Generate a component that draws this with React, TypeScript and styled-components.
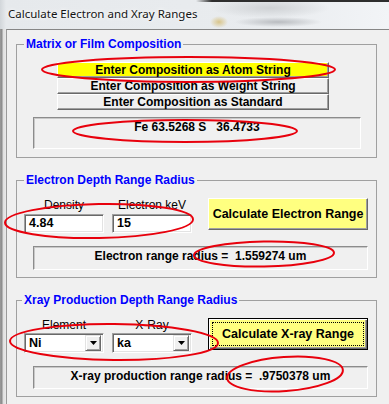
import styled, { createGlobalStyle } from "styled-components";

const GlobalStyle = createGlobalStyle`
  html, body {
    margin: 0;
    padding: 0;
    background: #f0f0f0;
  }
  body {
    font-family: "Liberation Sans", Arial, sans-serif;
  }
`;

const Window = styled.div`
  position: relative;
  width: 389px;
  height: 404px;
  overflow: hidden;
  display: flex;
  flex-direction: column;
  background: #f0f0f0;
`;

const TitleBar = styled.div`
  flex: none;
  height: 29px;
  box-sizing: border-box;
  display: flex;
  align-items: center;
  padding: 0 0 2px 8px;
  font-family: "Noto Sans", "Liberation Sans", sans-serif;
  font-size: 11.5px;
  color: #141414;
  text-shadow: 0 0 6px #fff, 0 0 3px #fff;
  background:
    linear-gradient(to right, transparent 196px, #2e2e2e 212px) top / 100% 2px no-repeat,
    radial-gradient(ellipse 9px 6px at 219px 22px, #d9c58a, transparent),
    radial-gradient(ellipse 44px 5px at 278px 22px, #b9bcc0, transparent),
    radial-gradient(ellipse 60px 10px at 270px 8px, #cfd2d5, transparent),
    linear-gradient(to right, #d2d6da 0, #e6e9ec 6px, #e9ecef 70%, #f2f4f7 100%);
`;

const Frame = styled.div`
  flex: 1;
  display: flex;
  background: linear-gradient(
    to right,
    #9b9b9b 0,
    #8a8a8a 2px,
    #dedede 3px,
    #e9e9e9 6px
  );
`;

const Client = styled.div`
  flex: 1;
  margin-left: 6px;
  border-top: 1px solid #868686;
  border-left: 1px solid #9a9a9a;
  background: #f0f0f0;
  padding: 6px 0 0 9px;
  display: flex;
  flex-direction: column;
  gap: 14px;
`;

const Group = styled.fieldset`
  margin: 0;
  width: 361px;
  min-width: 0;
  box-sizing: border-box;
  border: 1px solid #a0a0a0;
  padding: 10px 0 ${(p) => p.$bottom ?? 7}px 7px;
`;

const Legend = styled.legend`
  margin-left: ${(p) => p.$shift ?? 0}px;
  padding: 0 2px;
  font-weight: bold;
  font-size: 12px;
  line-height: 16px;
  color: #0000ff;
`;

const ButtonStack = styled.div`
  display: flex;
  flex-direction: column;
  width: 272px;
  margin-left: 33px;
`;

const CompButton = styled.button<{ $active?: boolean }>`
  height: 16px;
  margin: 0;
  padding: 0;
  box-sizing: border-box;
  border: 1px solid;
  border-color: #ffffff #696969 #696969 #ffffff;
  box-shadow: inset -1px -1px 0 #a0a0a0;
  background: ${(p) => (p.$active ? "#ffff00" : "#f0f0f0")};
  font-family: "Liberation Sans", Arial, sans-serif;
  font-weight: bold;
  font-size: 12px;
  line-height: 13px;
  color: #000;
`;

const ResultBox = styled.div<{ $width: number; $height: number }>`
  margin: 7px 0 0 9px;
  width: ${(p) => p.$width}px;
  height: ${(p) => p.$height}px;
  box-sizing: border-box;
  border: 1px solid;
  border-color: #8c8c8c #ffffff #ffffff #8c8c8c;
  box-shadow: inset 1px 1px 0 #c8c8c8;
  padding-top: 1px;
  text-align: center;
  font-weight: bold;
  font-size: 12px;
  line-height: 16px;
  white-space: pre;
  color: #000;
`;

const Row = styled.div`
  display: flex;
  align-items: flex-start;
  gap: 8px;
  margin-bottom: 13px;
`;

const Field = styled.div`
  display: flex;
  flex-direction: column;
  width: 80px;
`;

const FieldLabel = styled.span`
  height: 14px;
  line-height: 14px;
  text-align: center;
  font-size: 12px;
  color: #000;
`;

const TextInput = styled.div`
  margin-top: 2px;
  height: 19px;
  box-sizing: border-box;
  border: 1px solid;
  border-color: #a0a0a0 #ffffff #ffffff #a0a0a0;
  box-shadow: inset 1px 1px 0 #696969, inset -1px -1px 0 #e3e3e3;
  background: #fff;
  padding: 0 0 0 4px;
  font-weight: bold;
  font-size: 12.5px;
  line-height: 17px;
  color: #000;
`;

const Combo = styled.div`
  margin-top: 1px;
  height: 20px;
  box-sizing: border-box;
  border: 1px solid;
  border-color: #a0a0a0 #ffffff #ffffff #a0a0a0;
  box-shadow: inset 1px 1px 0 #696969, inset -1px -1px 0 #e3e3e3;
  background: #fff;
  padding: 2px 2px 2px 4px;
  display: flex;
  align-items: center;
  justify-content: space-between;
  font-weight: bold;
  font-size: 12.5px;
  color: #000;
`;

const ComboArrow = styled.span`
  width: 16px;
  height: 16px;
  box-sizing: border-box;
  border: 1px solid;
  border-color: #e3e3e3 #696969 #696969 #e3e3e3;
  box-shadow: inset 1px 1px 0 #fff, inset -1px -1px 0 #a0a0a0;
  background: #f0f0f0;
  display: flex;
  align-items: center;
  justify-content: center;
`;

const CalcButton = styled.button<{ $focused?: boolean }>`
  margin: 0 0 0 8px;
  width: 160px;
  height: 32px;
  box-sizing: border-box;
  padding: 0;
  background: #ffff80;
  font-family: "Liberation Sans", Arial, sans-serif;
  font-weight: bold;
  font-size: 12.5px;
  color: #000;
  border: 1px solid;
  border-color: ${(p) =>
    p.$focused ? "#000" : "#ffffff #696969 #696969 #ffffff"};
  box-shadow: ${(p) =>
    p.$focused
      ? "inset 1px 1px 0 #fff, inset -1px -1px 0 #696969, inset -2px -2px 0 #a0a0a0"
      : "inset -1px -1px 0 #a0a0a0"};
  outline: ${(p) => (p.$focused ? "1px dotted #000" : "none")};
  outline-offset: -5px;
`;

const Annotations = styled.svg`
  position: absolute;
  inset: 0;
  pointer-events: none;
`;

const ELLIPSES = [
  { cx: 188.5, cy: 69.5, rx: 146.5, ry: 12.5, rot: 0 },
  { cx: 185, cy: 131, rx: 112, ry: 11, rot: 0 },
  { cx: 99, cy: 221, rx: 94, ry: 17, rot: -1 },
  { cx: 264, cy: 254, rx: 70, ry: 12.5, rot: -1 },
  { cx: 114, cy: 342, rx: 104, ry: 18, rot: 0.5 },
  { cx: 285, cy: 374, rx: 58, ry: 17, rot: -4 },
];

function DropArrow() {
  return (
    <svg width="7" height="4" viewBox="0 0 7 4">
      <path d="M0 0h7L3.5 4z" fill="#000" />
    </svg>
  );
}

export default function App() {
  return (
    <>
      <GlobalStyle />
      <Window>
        <TitleBar>Calculate Electron and Xray Ranges</TitleBar>
        <Frame>
          <Client>
            <Group $bottom={8}>
              <Legend>Matrix or Film Composition</Legend>
              <ButtonStack>
                <CompButton $active>Enter Composition as Atom String</CompButton>
                <CompButton>Enter Composition as Weight String</CompButton>
                <CompButton>Enter Composition as Standard</CompButton>
              </ButtonStack>
              <ResultBox $width={328} $height={32}>
                {"Fe 63.5268 S   36.4733"}
              </ResultBox>
            </Group>

            <Group>
              <Legend>Electron Depth Range Radius</Legend>
              <Row>
                <Field>
                  <FieldLabel>Density</FieldLabel>
                  <TextInput>4.84</TextInput>
                </Field>
                <Field>
                  <FieldLabel>Electron keV</FieldLabel>
                  <TextInput>15</TextInput>
                </Field>
                <CalcButton>Calculate Electron Range</CalcButton>
              </Row>
              <ResultBox $width={335} $height={24} style={{ marginTop: 0 }}>
                {"Electron range radius =  1.559274 um"}
              </ResultBox>
            </Group>

            <Group>
              <Legend $shift={-2}>Xray Production Depth Range Radius</Legend>
              <Row>
                <Field>
                  <FieldLabel>Element</FieldLabel>
                  <Combo>
                    Ni
                    <ComboArrow>
                      <DropArrow />
                    </ComboArrow>
                  </Combo>
                </Field>
                <Field>
                  <FieldLabel>X-Ray</FieldLabel>
                  <Combo>
                    ka
                    <ComboArrow>
                      <DropArrow />
                    </ComboArrow>
                  </Combo>
                </Field>
                <CalcButton $focused>Calculate X-ray Range</CalcButton>
              </Row>
              <ResultBox $width={335} $height={23} style={{ marginTop: 0 }}>
                {"X-ray production range radius =  .9750378 um"}
              </ResultBox>
            </Group>
          </Client>
        </Frame>
        <Annotations width="389" height="404" viewBox="0 0 389 404">
          {ELLIPSES.map((e, i) => (
            <ellipse
              key={i}
              cx={e.cx}
              cy={e.cy}
              rx={e.rx}
              ry={e.ry}
              transform={`rotate(${e.rot} ${e.cx} ${e.cy})`}
              fill="none"
              stroke="#e8000c"
              strokeWidth="2"
            />
          ))}
        </Annotations>
      </Window>
    </>
  );
}
